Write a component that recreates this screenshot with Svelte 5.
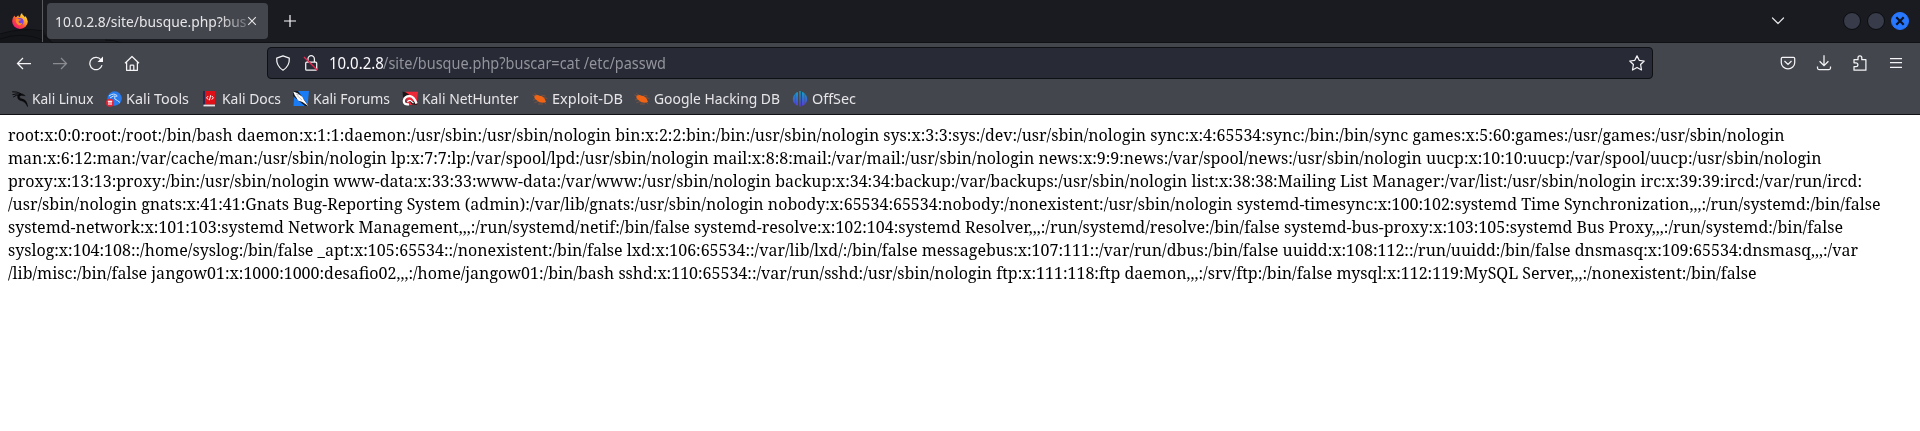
<script>
  const lines = [
    ['root:x:0:0:root:/root:/bin/bash daemon:x:1:1:daemon:/usr/sbin:/usr/sbin/nologin bin:x:2:2:bin:/bin:/usr/sbin/nologin sys:x:3:3:sys:/dev:/usr/sbin/nologin sync:x:4:65534:sync:/bin:/bin/sync games:x:5:60:games:/usr/games:/usr/sbin/nologin', 1776.5],
    ['man:x:6:12:man:/var/cache/man:/usr/sbin/nologin lp:x:7:7:lp:/var/spool/lpd:/usr/sbin/nologin mail:x:8:8:mail:/var/mail:/usr/sbin/nologin news:x:9:9:news:/var/spool/news:/usr/sbin/nologin uucp:x:10:10:uucp:/var/spool/uucp:/usr/sbin/nologin', 1813.5],
    ['proxy:x:13:13:proxy:/bin:/usr/sbin/nologin www-data:x:33:33:www-data:/var/www:/usr/sbin/nologin backup:x:34:34:backup:/var/backups:/usr/sbin/nologin list:x:38:38:Mailing List Manager:/var/list:/usr/sbin/nologin irc:x:39:39:ircd:/var/run/ircd:', 1854],
    ['/usr/sbin/nologin gnats:x:41:41:Gnats Bug-Reporting System (admin):/var/lib/gnats:/usr/sbin/nologin nobody:x:65534:65534:nobody:/nonexistent:/usr/sbin/nologin systemd-timesync:x:100:102:systemd Time Synchronization,,,:/run/systemd:/bin/false', 1872.5],
    ['systemd-network:x:101:103:systemd Network Management,,,:/run/systemd/netif:/bin/false systemd-resolve:x:102:104:systemd Resolver,,,:/run/systemd/resolve:/bin/false systemd-bus-proxy:x:103:105:systemd Bus Proxy,,,:/run/systemd:/bin/false', 1835],
    ['syslog:x:104:108::/home/syslog:/bin/false _apt:x:105:65534::/nonexistent:/bin/false lxd:x:106:65534::/var/lib/lxd/:/bin/false messagebus:x:107:111::/var/run/dbus:/bin/false uuidd:x:108:112::/run/uuidd:/bin/false dnsmasq:x:109:65534:dnsmasq,,,:/var', 1850],
    ['/lib/misc:/bin/false jangow01:x:1000:1000:desafio02,,,:/home/jangow01:/bin/bash sshd:x:110:65534::/var/run/sshd:/usr/sbin/nologin ftp:x:111:118:ftp daemon,,,:/srv/ftp:/bin/false mysql:x:112:119:MySQL Server,,,:/nonexistent:/bin/false', 1748.5]
  ];
  const bookmarks = [
    ['Kali Linux', 'linux', 61.5],
    ['Kali Tools', 'tools', 63],
    ['Kali Docs', 'docs', 59],
    ['Kali Forums', 'forums', 77],
    ['Kali NetHunter', 'nethunter', 96.5],
    ['Exploit-DB', 'bug', 71],
    ['Google Hacking DB', 'bug', 126],
    ['OffSec', 'offsec', 44]
  ];

  // Condenses a run of text horizontally to the given width.
  function fit(node, width) {
    const natural = node.getBoundingClientRect().width;
    node.style.transform = `scaleX(${width / natural})`;
    node.style.marginRight = `${width - natural}px`;
  }
</script>

<div class="window">
  <header class="tabs">
    <svg class="swirl" width="130" height="43" viewBox="0 0 130 43" fill="none">
      <path d="M0 35Q22 27 44 32L52 43H0z" fill="#141519" />
      <path d="M0 34Q22 27 44 31M0 39Q22 31 43 40M44 36Q49 38 52 43M105 40Q115 40 122 43" stroke="#0d0e11" />
    </svg>
    <div class="view">
      <svg width="16" height="16" viewBox="0 0 16 16">
        <defs>
          <linearGradient id="ff" x1="1" y1="0" x2=".2" y2="1">
            <stop offset="0" stop-color="#fff44f" /><stop offset=".4" stop-color="#ffa62b" /><stop offset=".65" stop-color="#ff4a3a" /><stop offset="1" stop-color="#f0147c" />
          </linearGradient>
        </defs>
        <path d="M2.4 2.6L3.3 4.2 4.7 3.8Q5.3 2.7 6.4 2.2 6.2 3.2 7 3.8L8 4Q8 1.3 10 0 10.2 1.8 12 3L12.5 4.3 13.1 3Q15.7 5.1 15.8 8.6A7.8 7.4 0 0 1 .2 8.6Q0 5.3 2.4 2.6z" fill="url(#ff)" />
        <circle cx="8" cy="8.6" r="3.6" fill="#7542e5" />
        <path d="M3.7 6Q5.5 5.2 7.2 6.2L9 6.4Q8.5 7.5 6.8 7.8 6.2 8.8 7.1 9.7 8.8 10.7 10.6 9.5 9.5 13 6.3 12 3.5 10.5 3.7 6z" fill="#ff8a20" />
      </svg>
    </div>
    <div class="tab">
      <div class="title"><span class="fit" use:fit={191.5}>10.0.2.8/site/busque.php?bus</span></div>
      <svg width="10" height="10" viewBox="0 0 10 10" stroke="#e4e4e6" stroke-width="1.1"><path d="M1.2 1.2l7.6 7.6M8.8 1.2L1.2 8.8" /></svg>
    </div>
    <svg class="plus" width="12" height="12" viewBox="0 0 12 12" stroke="#fbfbfe" stroke-width="1.2"><path d="M6 0v12M0 6h12" /></svg>
    <svg class="chevron" width="14" height="8" viewBox="0 0 14 8" fill="none" stroke="#e4e4e6" stroke-width="1.2" stroke-linecap="round" stroke-linejoin="round"><path d="M1.5 1L7 6.5 12.5 1" /></svg>
    <div class="controls">
      <i></i><i></i>
      <i class="close"><svg width="10" height="10" viewBox="0 0 10 10" stroke="#0c1220" stroke-width="2.2"><path d="M1.3 1.3l7.4 7.4M8.7 1.3L1.3 8.7" /></svg></i>
    </div>
  </header>

  <div class="nav">
    <div class="buttons">
      <svg width="16" height="16" viewBox="0 0 16 16"><path d="M15 8.5H1.5M7 3L1.5 8.5 7 14" /></svg>
      <svg class="dim" width="16" height="16" viewBox="0 0 16 16"><path d="M1 8.5h13.5M9 3L14.5 8.5 9 14" /></svg>
      <svg width="16" height="16" viewBox="0 0 16 16"><path d="M14 10.2A6.2 6.2 0 1 1 13 4.8" /><path d="M15 1.5V7H9.5z" fill="#fbfbfe" stroke="none" /></svg>
      <svg width="16" height="16" viewBox="0 0 16 16"><path stroke-linejoin="round" d="M1 8.2L8 1.5 15 8.2M2.6 7V15.3H13.4V7M6.2 15V10.8q0-.8.8-.8H9q.8 0 .8.8V15" /></svg>
    </div>
    <div class="url">
      <svg width="16" height="16" viewBox="0 0 16 16"><path stroke-linejoin="round" d="M8 .8L14.3 3.1Q14.8 11 8 15.2 1.2 11 1.7 3.1z" /></svg>
      <svg class="lock" width="16" height="16" viewBox="0 0 16 16"><path d="M5 7V3.9a3.2 3.2 0 0 1 6.4 0V7" /><rect x="2.7" y="7.2" width="11" height="8" rx="1" /><path d="M1 2L14.5 15.3" stroke="#e22850" stroke-width="1.4" /></svg>
      <span class="host"><span class="fit" use:fit={54.8}>10.0.2.8</span></span><span class="path"><span class="fit" use:fit={283}>/site/busque.php?buscar=cat /etc/passwd</span></span>
      <svg class="star" width="16" height="16" viewBox="0 0 16 16"><path stroke-linejoin="round" d="M8 .9L10.2 5.3 15.2 6 11.6 9.5 12.5 15 8 12.5 3.5 15 4.4 9.5.8 6 5.8 5.3z" /></svg>
    </div>
    <div class="actions">
      <svg width="16" height="16" viewBox="0 0 16 16"><path d="M2.5 2.3h11q1.2 0 1.2 1.2V7.8a6.7 6 0 0 1-13.4 0V3.5q0-1.2 1.2-1.2zM4.5 6L8 9.4 11.5 6" /></svg>
      <svg width="16" height="16" viewBox="0 0 16 16"><path d="M8 .3V10.5M3.6 6.3L8 10.7 12.4 6.3M1.5 11.5V13q0 1.5 1.5 1.5H13q1.5 0 1.5-1.5V11.5" /></svg>
      <svg width="16" height="16" viewBox="0 0 16 16"><path stroke-linejoin="round" d="M2 4.7H6V2.8a1.9 1.9 0 0 1 3.8 0V4.7H13.9V15.2H2V11.6H4a1.9 1.9 0 0 0 0-3.8H2z" /></svg>
      <svg width="16" height="16" viewBox="0 0 16 16"><path d="M2 3.5H14M2 7.5H14M2 12.3H14" /></svg>
    </div>
  </div>

  <nav class="bookmarks">
    {#each bookmarks as [name, icon, width]}
      <div class="bookmark">
        <svg width="16" height="16" viewBox="0 0 16 16" fill="none">
          {#if icon === 'linux'}
            <path d="M.2.8Q5 .4 9 2.7M.5 3.6Q5 2.1 9 3.4M1.2 6Q4 3.5 8.8 4.1" stroke="#08090b" stroke-width="1" />
            <path d="M7.8 2.4Q11 2.5 13.2 4.7L11.2 4.6Q8.4 3.7 7.5 5.2 6.8 7.3 10.5 8.1 14.8 9 15.6 15.7 14 11.2 10.3 10 5 9.2 5.7 5.1z" fill="#08090b" stroke="#08090b" stroke-width=".5" />
          {:else if icon === 'tools'}
            <circle cx="8.6" cy="7.5" r="7.2" fill="#287bee" />
            <path d="M3 5Q8 1.2 11.5 5M4 7Q7 4 11 5.2M8.8 5.5Q7.5 8.5 11.5 9.5L14 11.5" stroke="#c9e3ff" />
            <circle cx="4" cy="11.8" r="4" fill="#df2638" /><path d="M1.8 10.3H6.2M3 10.5V14M5 10.5V14" stroke="#fff" stroke-width="1.1" />
          {:else if icon === 'docs'}
            <path d="M1 0H13v13.5H1z" fill="#e01018" /><path d="M1 0H3v14H1z" fill="#2c2550" /><path d="M1.5 13.6H13V15.4H1.5z" fill="#e6dfe3" />
            <path d="M6.2 5L4.6 6.8 6.2 8.6M9.8 5L11.4 6.8 9.8 8.6M8.7 4.2L7.4 9.3" stroke="#fff" stroke-width="1" />
          {:else if icon === 'forums'}
            <path d="M3 0H16L14.5 15H.5L1.2 5z" fill="#1a7cf5" /><path d="M0 0H5L15.5 15H12L0 5z" fill="#171b22" />
            <path d="M.2.5L4.5 2.2 9.5 6 11 9 15.5 15.3 9.5 11 5 9.4 3.5 6.7 1.7 4.3z" fill="#fff" /><path d="M4 4.5L9 9M3 3L6 4" stroke="#9da6b2" stroke-width=".7" />
          {:else if icon === 'nethunter'}
            <path d="M3.5 .8H16L14.5 14H5z" fill="#ee2a38" /><path d="M.5 .5L4 1.5 7 3.5 3 7 1 6zM7 9L12 10.5 15.5 14 10 13.5z" fill="#1b1718" />
            <path d="M7 13.3Q1.6 14 1.8 9.8 2.5 5 8 5.2 12 5.8 14.5 12.5" stroke="#fff" stroke-width="2.3" /><path d="M5.5 11Q6.2 9.2 8.5 9.5L11.5 12" stroke="#fff" stroke-width="1.2" />
          {:else if icon === 'bug'}
            <path d="M.5 3.8L5 6.2M2.5 2.5L6 4.8M1 9L4.5 8.2M2.5 11.6L6.5 10.4M6 13H11M9.5 4.2L13.5 5M12 6.5L15.5 7.7M12 11L14 13.2" stroke="#8c563c" stroke-width=".7" />
            <path d="M2.5 4.8Q5.5 3.4 7.5 4.7 11.4 5 12.8 8.1L14 11 11 11.8Q6.9 11.8 4.7 9.2L2.4 7z" fill="#f06414" />
          {:else}
            <defs><linearGradient id="off" gradientUnits="userSpaceOnUse" x1="0" y1="0" x2="0" y2="16"><stop stop-color="#0da5c8" /><stop offset="1" stop-color="#5a35df" /></linearGradient></defs>
            <path d="M6 1V14.8A7.4 7.4 0 0 1 3.3 13.4V2.4A7.4 7.4 0 0 1 6 1zM10 1V14.8A7.4 7.4 0 0 0 12.7 13.4V2.4A7.4 7.4 0 0 0 10 1zM2.9 2.9V13A7 7 0 0 1 2.9 2.9zM13.1 2.9V13A7 7 0 0 0 13.1 2.9zM7.3 0H8.7V15.6H7.3z" fill="url(#off)" />
          {/if}
        </svg>
        <span class="fit" use:fit={width}>{name}</span>
      </div>
    {/each}
  </nav>

  <main>
    {#each lines as [text, width]}
      <div class="line"><span class="fit" use:fit={width}>{text}</span></div>
    {/each}
  </main>
</div>

<style>
  :global(body) { margin: 0; background: #fff; overflow: hidden; }
  .window { width: 1920px; height: 431px; overflow: hidden; background: #fff; font: 15.2px "Noto Sans", sans-serif; color: #e6e6e9; }
  svg { display: block; flex: none; }
  .fit { display: inline-block; white-space: pre; transform-origin: 0 50%; }
  .tabs { position: relative; box-sizing: border-box; display: flex; align-items: center; height: 43px; background: #1a1b20; border-bottom: 1px solid #101114; }
  .swirl { position: absolute; left: 0; top: 0; }
  .view { position: relative; box-sizing: border-box; width: 43px; height: 42px; padding: 13px 0 0 12px; border-right: 1px solid #5b5c60; }
  .tab { position: relative; box-sizing: border-box; display: flex; align-items: center; width: 221px; height: 36px; margin-left: 4px; padding-left: 7.5px; border-radius: 4px; background: #44464e; }
  .title { width: 192px; overflow: hidden; line-height: 36px; mask-image: linear-gradient(90deg, #000 164px, transparent 202px); }
  .plus { margin-left: 16px; }
  .chevron { margin-left: auto; }
  .controls { display: flex; gap: 6px; margin: 0 11px 0 58px; }
  .controls i { box-sizing: border-box; display: grid; place-items: center; width: 18px; height: 18px; border: 1px solid #0b0c0f; border-radius: 50%; background: #383c4a; }
  .controls .close { background: #2777ff; border-color: #2777ff; }
  .nav { display: flex; align-items: center; height: 40px; background: #44464e; }
  .nav svg { fill: none; stroke: #f4f4f6; stroke-width: 1.25; }
  .buttons { display: flex; gap: 20px; width: 251px; padding-left: 16px; }
  .nav .dim { opacity: .4; }
  .url { box-sizing: border-box; display: flex; align-items: center; width: 1386px; height: 32px; padding: 0 7px; border: 1px solid #0f1014; border-radius: 4px; background: #282a36; font-size: 16.3px; }
  .nav .lock { margin: 0 9.5px 0 12px; }
  .host { color: #fbfbfe; }
  .path { color: #93949b; }
  .star { margin-left: auto; }
  .actions { display: flex; gap: 20px; margin-left: 127px; }
  .bookmarks { box-sizing: border-box; display: grid; grid-template-columns: 94px 95.5px 91.5px 109px 129.5px 102.5px 158px 80px; height: 32px; padding-left: 12px; background: #44464e; border-bottom: 1px solid #101114; }
  .bookmark { display: flex; align-items: center; gap: 4px; height: 31px; line-height: 31px; }
  main { padding: 8px; color: #000; font: 17px "Noto Serif", "DejaVu Serif Condensed", "DejaVu Serif", serif; }
  .line { height: 23px; line-height: 23px; }
</style>
